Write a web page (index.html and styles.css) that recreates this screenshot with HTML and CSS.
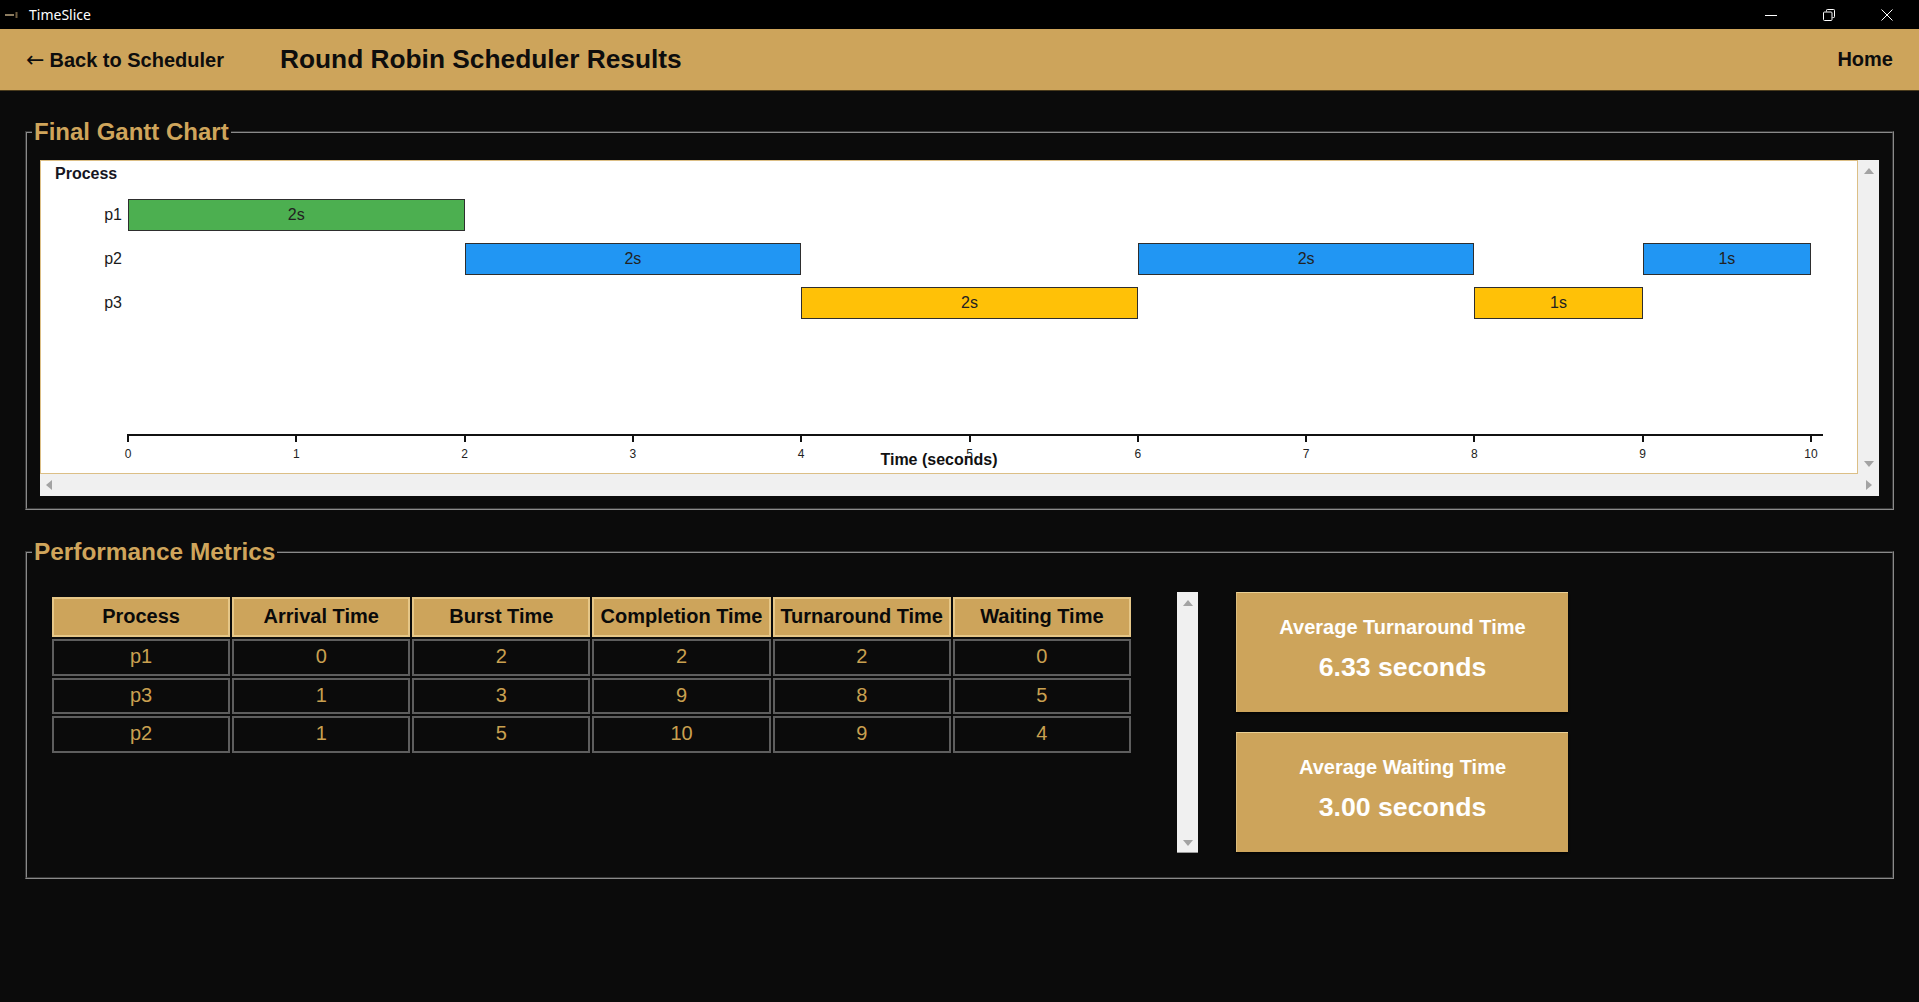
FILE: index.html
```html
<!DOCTYPE html>
<html lang="en">
<head>
<meta charset="utf-8">
<title>TimeSlice</title>
<link rel="stylesheet" href="styles.css">
</head>
<body>
<div class="titlebar">
  <svg class="app-icon" width="14" height="8" viewBox="0 0 14 8"><path d="M0 4h9" stroke="#8c7c60" stroke-width="2"/><path d="M11.5 1v6" stroke="#6e5c40" stroke-width="2"/></svg>
  <span class="app-title">TimeSlice</span>
  <div class="win-controls">
    <span class="win-btn"><svg width="12" height="12" viewBox="0 0 12 12"><path d="M0 6.5h12" stroke="#fff" stroke-width="1"/></svg></span>
    <span class="win-btn"><svg width="12" height="12" viewBox="0 0 12 12"><path d="M3.5 2.5v-1.2q0-.8.8-.8h6.4q.8 0 .8.8v6.4q0 .8-.8.8h-1.2" fill="none" stroke="#fff" stroke-width="1"/><rect x="0.5" y="3" width="8.5" height="8.5" rx="1" fill="none" stroke="#fff" stroke-width="1"/></svg></span>
    <span class="win-btn"><svg width="12" height="12" viewBox="0 0 12 12"><path d="M0.5 0.5l11 11M11.5 0.5l-11 11" stroke="#fff" stroke-width="1"/></svg></span>
  </div>
</div>

<header class="topbar">
  <a class="back"><span class="back-arrow">←</span>Back to Scheduler</a>
  <h1 class="page-title">Round Robin Scheduler Results</h1>
  <a class="home">Home</a>
</header>

<main class="content">
  <fieldset class="panel gantt-panel">
    <legend>Final Gantt Chart</legend>
    <div class="chart-box">
      <div class="chart-view">
        <div class="chart-head">Process</div>
        <div class="g-rows">
          <div class="g-row">
            <span class="g-label">p1</span>
            <div class="g-track">
              <div class="bar green" style="left:0%;width:20%">2s</div>
            </div>
          </div>
          <div class="g-row">
            <span class="g-label">p2</span>
            <div class="g-track">
              <div class="bar blue" style="left:20%;width:20%">2s</div>
              <div class="bar blue" style="left:60%;width:20%">2s</div>
              <div class="bar blue" style="left:90%;width:10%">1s</div>
            </div>
          </div>
          <div class="g-row">
            <span class="g-label">p3</span>
            <div class="g-track">
              <div class="bar amber" style="left:40%;width:20%">2s</div>
              <div class="bar amber" style="left:80%;width:10%">1s</div>
            </div>
          </div>
        </div>
        <div class="g-axis">
          <div class="tick" style="left:0%"><span>0</span></div>
          <div class="tick" style="left:10%"><span>1</span></div>
          <div class="tick" style="left:20%"><span>2</span></div>
          <div class="tick" style="left:30%"><span>3</span></div>
          <div class="tick" style="left:40%"><span>4</span></div>
          <div class="tick" style="left:50%"><span>5</span></div>
          <div class="tick" style="left:60%"><span>6</span></div>
          <div class="tick" style="left:70%"><span>7</span></div>
          <div class="tick" style="left:80%"><span>8</span></div>
          <div class="tick" style="left:90%"><span>9</span></div>
          <div class="tick" style="left:100%"><span>10</span></div>
        </div>
        <div class="x-title">Time (seconds)</div>
      </div>
      <div class="vscroll">
        <svg class="arrow" width="10" height="6" viewBox="0 0 10 6"><path d="M5 0L10 6H0z" fill="#a3a3a3"/></svg>
        <svg class="arrow" width="10" height="6" viewBox="0 0 10 6"><path d="M0 0H10L5 6z" fill="#a3a3a3"/></svg>
      </div>
      <div class="hscroll">
        <svg class="arrow" width="6" height="10" viewBox="0 0 6 10"><path d="M0 5L6 0V10z" fill="#a3a3a3"/></svg>
        <svg class="arrow" width="6" height="10" viewBox="0 0 6 10"><path d="M0 0L6 5L0 10z" fill="#a3a3a3"/></svg>
      </div>
    </div>
  </fieldset>

  <fieldset class="panel metrics-panel">
    <legend>Performance Metrics</legend>
    <div class="metrics">
      <div class="table-wrap">
        <div class="table-area">
          <table class="results">
            <thead>
              <tr><th>Process</th><th>Arrival Time</th><th>Burst Time</th><th>Completion Time</th><th>Turnaround Time</th><th>Waiting Time</th></tr>
            </thead>
            <tbody>
              <tr><td>p1</td><td>0</td><td>2</td><td>2</td><td>2</td><td>0</td></tr>
              <tr><td>p3</td><td>1</td><td>3</td><td>9</td><td>8</td><td>5</td></tr>
              <tr><td>p2</td><td>1</td><td>5</td><td>10</td><td>9</td><td>4</td></tr>
            </tbody>
          </table>
        </div>
        <div class="vscroll small">
          <svg class="arrow" width="10" height="6" viewBox="0 0 10 6"><path d="M5 0L10 6H0z" fill="#a3a3a3"/></svg>
          <svg class="arrow" width="10" height="6" viewBox="0 0 10 6"><path d="M0 0H10L5 6z" fill="#a3a3a3"/></svg>
        </div>
      </div>
      <div class="cards">
        <div class="card">
          <div class="card-label">Average Turnaround Time</div>
          <div class="card-value">6.33 seconds</div>
        </div>
        <div class="card">
          <div class="card-label">Average Waiting Time</div>
          <div class="card-value">3.00 seconds</div>
        </div>
      </div>
    </div>
  </fieldset>
</main>
</body>
</html>
```

FILE: styles.css
```css
html, body {
  margin: 0;
  padding: 0;
}
body {
  background: #0b0b0b;
  font-family: "Liberation Sans", Arial, sans-serif;
  width: 1919px;
  height: 1002px;
  overflow: hidden;
}

/* window title bar */
.titlebar {
  height: 29px;
  background: #000;
  display: flex;
  align-items: center;
  color: #fff;
}
.app-icon {
  margin-left: 5px;
  display: block;
}
.app-title {
  margin-left: 10px;
  font-family: "Noto Sans", sans-serif;
  font-size: 14px;
}
.win-controls {
  margin-left: auto;
  margin-right: 3px;
  display: flex;
  height: 29px;
}
.win-btn {
  width: 58px;
  display: flex;
  align-items: center;
  justify-content: center;
}
.win-btn svg {
  display: block;
}

/* app header */
.topbar {
  height: 61px;
  background: #cda45b;
  border-bottom: 1px solid #4a3b1c;
  display: flex;
  align-items: center;
  padding: 0 26px;
  color: #0d0d0d;
}
.back {
  font-size: 20px;
  font-weight: bold;
  padding-top: 1px;
  display: flex;
  align-items: center;
}
.back-arrow {
  font-family: "DejaVu Sans", sans-serif;
  font-weight: normal;
  font-size: 22px;
  margin-right: 5px;
  position: relative;
  top: -1px;
}
.page-title {
  margin: 0 0 0 56px;
  font-size: 26.3px;
  font-weight: bold;
}
.home {
  margin-left: auto;
  font-size: 20px;
  font-weight: bold;
}

/* content */
.content {
  padding: 27px 25px 0;
}
.panel {
  margin: 0;
  min-width: 0;
  border: 2px groove #8a8a8a;
  padding: 14px 13px 12px;
}
.panel legend {
  color: #cfa55b;
  font-size: 24px;
  font-weight: bold;
  padding: 0 2px;
  margin-left: -8px;
}
.metrics-panel {
  margin-top: 28px;
  padding-top: 26px;
  padding-bottom: 24px;
}
.metrics-panel legend {
  font-size: 24.4px;
}

/* gantt chart */
.chart-box {
  display: grid;
  grid-template-columns: 1fr 21px;
  grid-template-rows: 314px 22px;
}
.chart-view {
  background: #fff;
  border: 1px solid #dcbf86;
  overflow: hidden;
  padding-top: 4px;
  color: #111;
}
.chart-head {
  font-size: 16px;
  font-weight: bold;
  line-height: 18px;
  padding-left: 14px;
  color: #151522;
}
.g-rows {
  margin-top: 16px;
  display: flex;
  flex-direction: column;
  gap: 12px;
}
.g-row {
  display: flex;
  align-items: center;
  height: 32px;
}
.g-label {
  width: 81px;
  padding-right: 6px;
  text-align: right;
  font-size: 16px;
  color: #1a1a1a;
}
.g-track {
  position: relative;
  width: 1683px;
  height: 32px;
}
.bar {
  position: absolute;
  top: 0;
  height: 32px;
  box-sizing: border-box;
  border: 1px solid #2e2e2e;
  display: flex;
  align-items: center;
  justify-content: center;
  font-size: 16px;
  color: #222;
}
.bar.green { background: #4caf50; }
.bar.blue { background: #2196f3; }
.bar.amber { background: #ffc107; }

.g-axis {
  position: relative;
  margin-top: 115px;
  margin-left: 87px;
  width: 1683px;
  height: 17px;
}
.g-axis::before {
  content: "";
  position: absolute;
  left: 0;
  top: 0;
  width: 1695px;
  height: 2px;
  background: #111;
}
.tick {
  position: absolute;
  top: 0;
  width: 2px;
  height: 8px;
  margin-left: -1px;
  background: #111;
}
.tick span {
  position: absolute;
  top: 13px;
  left: 1px;
  transform: translateX(-50%);
  font-size: 12px;
  line-height: 14px;
  color: #222;
}
.x-title {
  text-align: center;
  padding-right: 20px;
  font-size: 16px;
  font-weight: bold;
  line-height: 18px;
  color: #111;
  position: relative;
}

/* fake scrollbars */
.vscroll {
  background: #f0f0f0;
  display: flex;
  flex-direction: column;
  align-items: center;
  justify-content: space-between;
  padding: 8px 0 7px;
  box-sizing: border-box;
}
.hscroll {
  grid-column: 1 / span 2;
  background: #f0f0f0;
  display: flex;
  align-items: center;
  justify-content: space-between;
  padding: 0 7px 0 6px;
}
.arrow {
  display: block;
}

/* metrics */
.metrics {
  display: flex;
  align-items: flex-start;
}
.table-wrap {
  display: flex;
  width: 1158px;
  height: 261px;
}
.table-area {
  flex: 1;
  padding: 3px 0 0 10px;
}
.vscroll.small {
  width: 21px;
  height: 261px;
  padding: 8px 0 6px;
  border-bottom: 1px solid #9a9a9a;
}
.results {
  border-collapse: separate;
  border-spacing: 2px;
  table-layout: fixed;
  width: 1083px;
}
.results th {
  background: #cda45b;
  color: #0a0a0a;
  font-size: 20px;
  font-weight: bold;
  border: 2px solid #e6c788;
  padding: 6px 0 7px;
  text-align: center;
}
.results td {
  color: #c9a050;
  font-size: 20px;
  border: 2px solid #5e5e5e;
  padding: 4px 0 5.5px;
  text-align: center;
  background: #0b0b0b;
}

.cards {
  margin-left: 38px;
  display: flex;
  flex-direction: column;
  gap: 20px;
}
.card {
  width: 332px;
  height: 120px;
  box-sizing: border-box;
  background: #cda45b;
  border-top: 1px solid #ead095;
  border-left: 1px solid #dcbd7d;
  box-shadow: 0 2px 2px rgba(0, 0, 0, 0.6);
  color: #fff;
  text-align: center;
  padding-top: 23px;
}
.card-label {
  font-size: 20px;
  font-weight: bold;
  line-height: 22px;
}
.card-value {
  margin-top: 14px;
  font-size: 26.7px;
  font-weight: bold;
  line-height: 31px;
}
```
